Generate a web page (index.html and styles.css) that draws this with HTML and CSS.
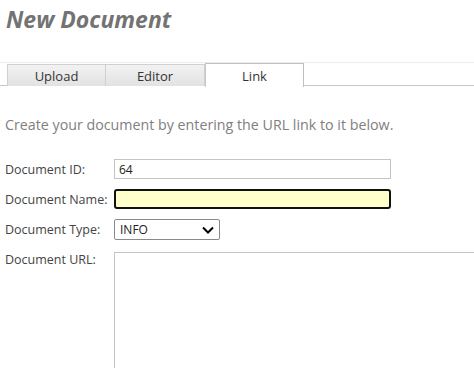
FILE: index.html
```html
<!DOCTYPE html>
<html>
<head>
<meta charset="utf-8">
<link rel="stylesheet" href="styles.css">
</head>
<body>
<h1 class="title">New Document</h1>
<div class="tabs">
  <div class="tab">Upload</div>
  <div class="tab">Editor</div>
  <div class="tab active">Link</div>
</div>
<p class="intro">Create your document by entering the URL link to it below.</p>
<div class="form">
  <label class="lbl">Document ID:</label>
  <div class="field"><input class="inp" type="text" value="64"></div>
  <label class="lbl">Document Name:</label>
  <div class="field"><input class="inp focus" type="text" value=""></div>
  <label class="lbl">Document Type:</label>
  <div class="field">
    <div class="select"><span>INFO</span>
      <svg class="chev" width="12" height="8" viewBox="0 0 12 8"><path d="M1 1.5 L6 6.5 L11 1.5" fill="none" stroke="#000" stroke-width="2"/></svg>
    </div>
  </div>
  <label class="lbl lbl-top">Document URL:</label>
  <div class="field"><textarea class="area"></textarea></div>
</div>
</body>
</html>
```
FILE: styles.css
```css
html, body { margin: 0; padding: 0; background: #fff; }
body { font-family: "Open Sans", "Liberation Sans", sans-serif; color: #444; overflow: hidden; height: 368px; }
.title {
  margin: 0;
  padding: 4px 0 0 6px;
  height: 55px;
  box-sizing: border-box;
  font-size: 23px;
  font-weight: 700;
  font-style: italic;
  color: #737373;
  line-height: 30px;
}
.tabs {
  display: flex;
  margin-top: 7px;
  padding-left: 7px;
  border-top: 1px solid #ececec;
  border-bottom: 1px solid #c8c8c8;
  height: 22px;
}
.tab {
  width: 99px;
  height: 22px;
  box-sizing: border-box;
  border: 1px solid #d0d0d0;
  border-bottom: none;
  background: linear-gradient(#f2f2f2, #e2e2e2);
  font-size: 13px;
  color: #333;
  text-align: center;
  line-height: 22px;
  margin-top: 1px;
}
.tab + .tab { border-left: none; }
.tab.active {
  background: #fff;
  height: 24px;
  border: 1px solid #c0c0c0;
  border-bottom: none;
  border-left: 1px solid #c8c8c8;
  margin-top: 0;
  line-height: 24px;
}
.intro {
  margin: 29px 0 0 5px;
  font-size: 14.25px;
  color: #808080;
  line-height: 20px;
}
.form {
  margin-top: 24px;
  display: grid;
  grid-template-columns: 109px 1fr;
  row-gap: 10px;
  padding-left: 5px;
}
.lbl { color: #444; line-height: 18px; font-size: 12.5px; padding-top: 2px; }
.lbl-top { padding-top: 1px; }
.field { display: flex; }
.inp {
  width: 277px;
  height: 20px;
  box-sizing: border-box;
  border: 1px solid #c4c4c4;
  padding: 0 4px;
  font-family: inherit;
  font-size: 12px;
  color: #222;
  outline: none;
}
.inp.focus {
  background: #ffffcc;
  border: 2px solid #111;
  border-radius: 3px;
}
.select {
  width: 106px;
  height: 21px;
  box-sizing: border-box;
  border: 1px solid #8a8a8a;
  display: flex;
  align-items: center;
  justify-content: space-between;
  padding: 0 5px;
  font-size: 12px;
  color: #222;
  border-radius: 2px;
}
.chev { display: block; }
.area {
  width: 360px;
  height: 116px;
  box-sizing: border-box;
  border: 1px solid #c4c4c4;
  border-right: none;
  border-bottom: none;
  resize: none;
  outline: none;
  margin: 2px 0 0 0;
  display: block;
}
```
